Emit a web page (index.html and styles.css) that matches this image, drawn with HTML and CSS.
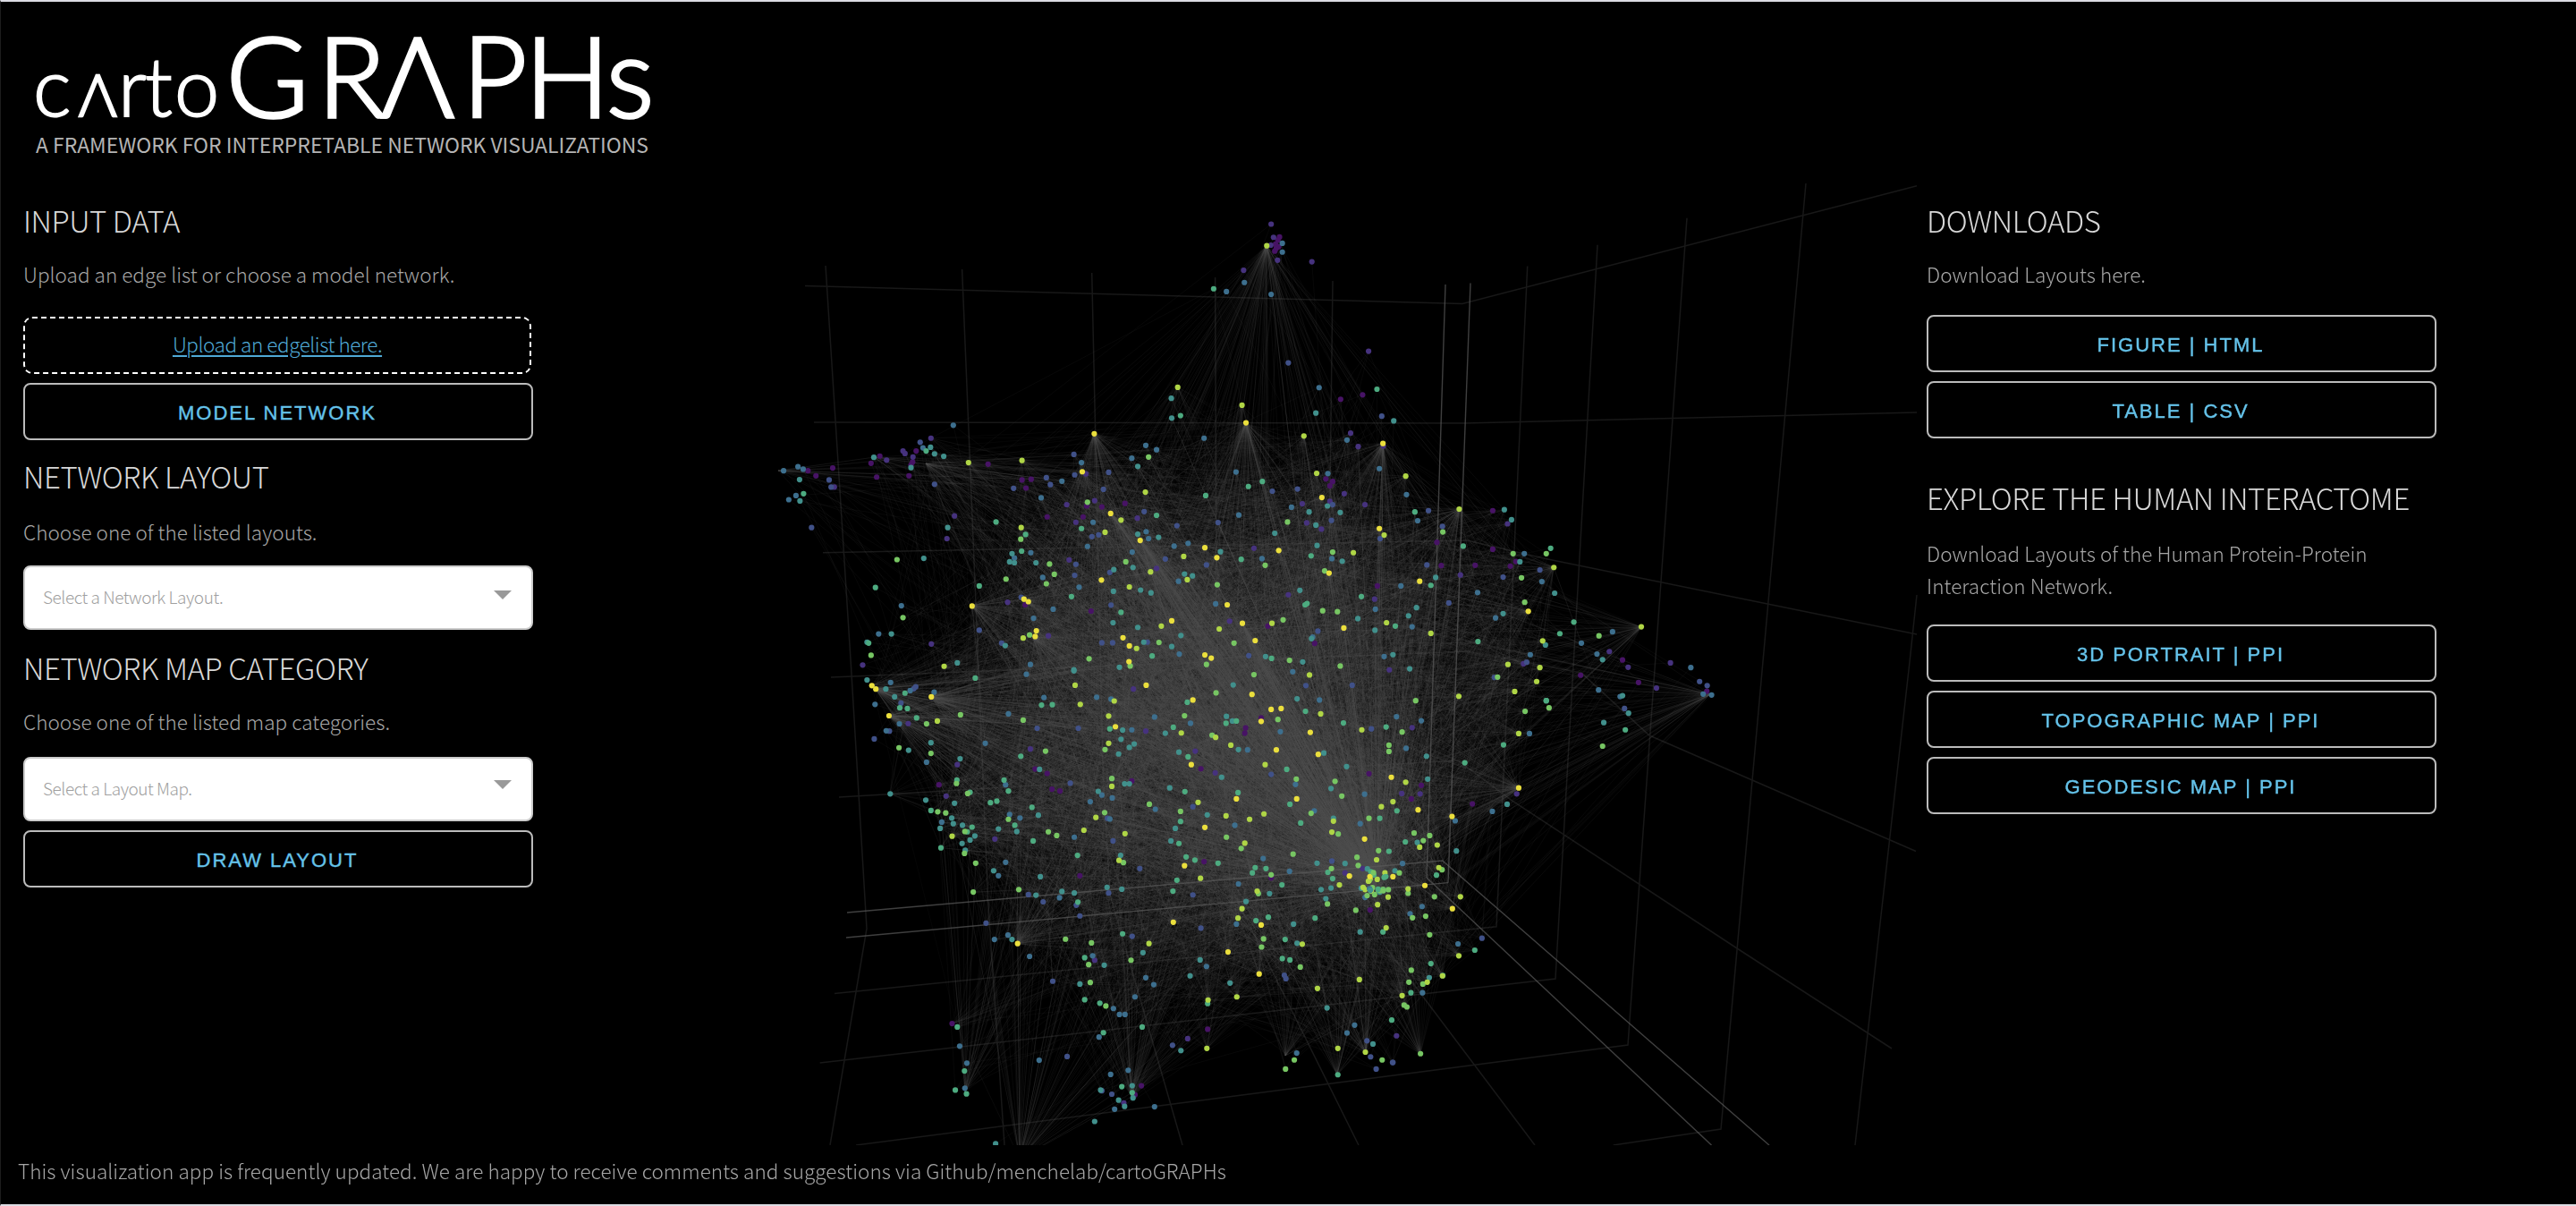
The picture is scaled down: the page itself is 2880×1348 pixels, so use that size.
FILE: index.html
```html
<!DOCTYPE html>
<html lang="en">
<head>
<meta charset="utf-8">
<title>cartoGRAPHs</title>
<link rel="stylesheet" href="styles.css">
</head>
<body>
<div class="app">
  <header class="header">
    <svg class="logo" width="740" height="190" viewBox="0 0 740 190" role="img" aria-label="cartoGRAPHs">
      <text class="logo-small" y="128" x="36">c<tspan class="logo-peak" x="87">Λ</tspan><tspan x="131 161 194">rto</tspan></text>
      <text class="logo-large" y="128.500" x="252 354 425 516 586 677">GRΛPHs</text>
      <text class="logo-sub" x="39" y="169" textLength="685" lengthAdjust="spacingAndGlyphs">A FRAMEWORK FOR INTERPRETABLE NETWORK VISUALIZATIONS</text>
    </svg>
  </header>
  <main class="main">
    <section class="panel panel-left">
      <h2 class="title">INPUT DATA</h2>
      <p class="text">Upload an edge list or choose a model network.</p>
      <div class="upload"><a class="upload-link">Upload an edgelist here.</a></div>
      <button class="button">MODEL NETWORK</button>
      <h2 class="title title-layout">NETWORK LAYOUT</h2>
      <p class="text text-layout">Choose one of the listed layouts.</p>
      <div class="select"><span class="select-label">Select a Network Layout.</span><i class="arrow"></i></div>
      <h2 class="title title-map">NETWORK MAP CATEGORY</h2>
      <p class="text text-map">Choose one of the listed map categories.</p>
      <div class="select"><span class="select-label">Select a Layout Map.</span><i class="arrow arrow-up"></i></div>
      <button class="button">DRAW LAYOUT</button>
    </section>
    <canvas class="plot" id="plot" width="1284" height="1075"></canvas>
    <section class="panel panel-right">
      <h2 class="title">DOWNLOADS</h2>
      <p class="text text-downloads">Download Layouts here.</p>
      <button class="button">FIGURE | HTML</button>
      <button class="button">TABLE | CSV</button>
      <h2 class="title title-explore">EXPLORE THE HUMAN INTERACTOME</h2>
      <p class="text text-explore">Download Layouts of the Human Protein-Protein<br>Interaction Network.</p>
      <button class="button">3D PORTRAIT | PPI</button>
      <button class="button">TOPOGRAPHIC MAP | PPI</button>
      <button class="button">GEODESIC MAP | PPI</button>
    </section>
  </main>
  <footer class="footer">This visualization app is frequently updated. We are happy to receive comments and suggestions via Github/menchelab/cartoGRAPHs</footer>
</div>
<script src="plot.js"></script>
</body>
</html>
```
FILE: styles.css
```css
* { box-sizing: border-box; }
body {
  margin: 0;
  background: #000;
  color: #a6a6a6;
  font-family: "Noto Sans CJK SC", "Noto Sans", sans-serif;
  font-weight: 300;
}
.app {
  width: 2880px;
  height: 1348px;
  border-top: 2px solid #dcdce4;
  border-bottom: 2px solid #dcdce4;
  border-left: 1px solid #1d1d1d;
  display: flex;
  flex-direction: column;
  overflow: hidden;
}
.header { height: 203px; flex: none; }
.logo { display: block; }
.logo text { fill: #fff; }
.logo .logo-small, .logo .logo-large { font-family: Lato, sans-serif; font-weight: 300; stroke: #fff; }
.logo .logo-small { font-size: 90px; stroke-width: 1.8px; }
.logo .logo-peak { font-size: 65px; stroke-width: 2.5px; }
.logo .logo-large { font-size: 125px; stroke-width: 3.5px; }
.logo .logo-sub { fill: #b4b4b4; font-size: 23.5px; font-weight: 400; }
.main { height: 1075px; flex: none; display: flex; }
.panel { width: 570px; padding-top: 21px; display: flex; flex-direction: column; flex: none; }
.panel-left { margin-left: 25px; }
.panel-right { margin-left: 10px; }
.plot { width: 1284px; height: 1075px; margin-left: 264px; flex: none; display: block; }
.title {
  margin: 0;
  color: #d8d8d8;
  font-size: 33px;
  line-height: 40px;
  font-weight: 300;
  letter-spacing: -0.42px;
  white-space: nowrap;
}
.text {
  margin: 22px 0 30px;
  font-size: 22.5px;
  line-height: 36px;
  letter-spacing: 0.03px;
  white-space: nowrap;
}
.title-layout { margin-top: 10px; }
.title-map { margin-top: 22px; }
.title-explore { margin-top: 36px; }
.text-layout { margin: 24px 0 20px; }
.text-map { margin-bottom: 22px; }
.text-downloads { margin-bottom: 28px; }
.text-explore { margin: 24px 0 26px; }
.upload {
  width: 568px;
  height: 64px;
  margin-bottom: 10px;
  border: 2px dashed #fff;
  border-radius: 10px;
  text-align: center;
  font-size: 22.5px;
  line-height: 57px;
  letter-spacing: -0.45px;
}
.upload-link { color: #4fa9d6; text-decoration: underline; text-decoration-thickness: 2px; text-underline-offset: 3px; }
.button {
  height: 64px;
  margin: 0 0 10px;
  padding: 4px 2px 0 0;
  flex: none;
  border: 2px solid #bbb;
  border-radius: 8px;
  background: transparent;
  color: #65c3ea;
  font: 400 22px "Liberation Sans", sans-serif;
  letter-spacing: 2px;
  -webkit-text-stroke: 0.4px #65c3ea;
}
.select {
  height: 72px;
  flex: none;
  border: 2px solid #ccc;
  border-radius: 8px;
  background: #fff;
  color: #a0a0a0;
  font-size: 19px;
  letter-spacing: -0.45px;
  line-height: 66px;
  padding: 0 22px 0 20px;
  display: flex;
  justify-content: space-between;
}
.select + .button { margin-top: 10px; }
.arrow {
  margin-top: 26px;
  width: 20px;
  height: 10px;
  background: #999;
  clip-path: polygon(0 0, 100% 0, 50% 100%);
}
.arrow-up { margin-top: 24px; }
.footer { padding-left: 19px; margin-top: 10px; font-size: 22.5px; line-height: 36px; letter-spacing: 0.05px; white-space: nowrap; }
```
FILE: plot.js
```js
// Viridis steps, low to high degree.
const COLORS = {
  a: '#471365', b: '#46327e', c: '#405188', d: '#3d6f8e', e: '#41908c',
  f: '#4dab80', g: '#77c663', h: '#b0d646', i: '#ebdf3d'
};

// Node positions by quadrant: [x origin, y origin, nodes by colour].
const SX = 700 / 1568, SY = 550 / 1568;
const QUADRANTS = [
  [860, 200, {
    a: '1278 185 1274 195 1268 208 1276 216 1266 230 1270 221 97 930 117 946 159 921 255 906 269 950 277 883 368 867 359 902 355 912 350 946 548 909 633 959 656 957 643 985 795 1042 833 1045 891 1034 786 1077 696 1077 1431 702 1394 956 1411 964 1404 978 806 1377 641 1357 1249 1425 1366 1480 1523 1297 1486 688',
    b: '1257 144 1263 186 1256 211 1273 259 1188 291 1359 264 1501 549 405 826 335 867 360 886 294 896 340 875 163 982 464 1074 445 1146 234 1549 406 1482 745 1038 815 1025 768 1094 922 1081 751 1214 970 1241 597 1349 699 1456 1456 810 1475 853 1538 851 1440 1003 1335 1035 1404 1027 1492 1038 1346 1096 1383 1116 1214 1177 1300 1325 1516 1339 793 940 1153 1409',
    c: '106 1111 155 982 150 959 378 839 414 973 763 878 765 943 694 952 612 986 704 974 850 935 837 989 768 1228 765 1263 853 1254 856 1358 939 1060 808 1140 825 1134 1021 1105 992 1211 1124 1095 1095 1230 860 1478 833 1478 582 1479 526 1438 631 1333 1300 586 1323 988 1408 1088 1411 1038 1530 1146 1374 1441 1201 1519 1260 995 1534 756 947 1476',
    d: '36 930 72 917 85 925 49 1022 67 1009 385 857 461 785 1285 205 1285 233 1257 368 1190 330 1145 359 1089 826 1377 665 943 849 970 863 782 904 733 963 1169 934 681 1016 811 1094 944 1124 950 1146 797 1171 1049 1161 1014 1170 909 1189 655 1191 614 1208 685 1270 776 1301 711 1371 662 1400 331 1360 274 1450 1118 1354 1447 832 1399 939 1528 923 1308 1046 1176 1071 1234 1210 1518 1371 1409 1210 1361 1460 1027 1514 654 1547 1540 1522 908 890 1025 1282',
    e: '76 958 77 1026 262 887 355 920 404 855 414 876 437 884 447 1111 387 1209 245 1476 306 1450 471 1542 591 1487 1007 699 1008 762 923 916 923 1132 975 1142 608 1194 602 1220 614 1223 668 1223 863 1245 911 1238 862 1314 930 1310 956 1319 861 1414 923 1429 1031 1455 1008 1490 938 1476 1040 1259 1060 1265 1130 1188 1369 746 1352 1061 1398 1042 1430 1063 1369 1103 1266 1129 1372 1168 1435 1218 1329 1311 1474 1401 1358 1465 1517 1438 1243 1522 1336 1539 877 1556 763 1564 1564 771 1562 1516',
    f: '86 1003 249 1479 266 1302 568 1093 526 1297 1113 350 393 867 1030 754 1235 964 1200 980 1093 1009 970 1072 782 1114 642 1133 632 1186 881 1381 757 1331 1182 1212 1357 1201 1342 1357 1483 1331 959 1520 1258 1528 1522 670 1347 1353',
    g: '320 1213 335 1398 255 1518 593 1275 630 1148 702 1227 714 1260 950 886 797 1030 893 1220 1242 1231 1122 1293 1298 1093 1391 1249 1386 1376 1423 1379 1287 1405 1411 1189 976 1477 1164 1479 1303 1534 1430 1552 904 1552 801 1529 652 1453 1095 1547 694 1290',
    h: '1246 213 1023 664 1184 721 1339 819 499 904 633 897 631 1111 841 1126 881 1087 942 998 955 1252 902 1300 1038 1203 1371 938 1463 1191 982 1425 1127 1434 1259 1416 1546 1414 438 1553 920 1496 1540 1135 636 1463 1047 1277',
    i: '814 812 1194 777 784 933 855 1066 929 1152 832 1278 638 1339 649 1347 508 1361 669 1440 666 1458 1091 1175 1121 1207 1276 1184 1384 1015 1537 843 1528 1114 1402 1256 1147 1357 1185 1416 1008 1408 1217 1471 1439 1431 886 1462 902 1488 901 1538 1091 1517 1107 1527'
  }],
  [1460, 200, {
    a: '468 1057 328 1158 424 1231 339 1232 468 1180 526 1219 512 1234 793 1533',
    b: '505 1099 387 1262 760 1506 913 1542 545 1545 807 1556',
    c: '307 1057 342 1107 303 1230 358 1351 586 1246 494 1269 553 1540',
    d: '252 1006 280 1089 238 1297 266 1427 430 1318 547 1194 591 1283 475 1399 562 1516 690 1479 768 1443 729 1514 964 1557',
    e: '497 1054 515 1086 325 1270 277 1366 257 1392 536 1220 494 1385 623 1320 600 1485 743 1532 260 1561',
    f: '273 1061 394 1170 313 1295 224 1425 613 1177 636 1449 671 1412 431 1474',
    g: '343 1125 519 1194 602 1194 540 1271 548 1349 734 1456',
    h: '250 947 384 1052 313 1448 506 1547 621 1238 593 1472 840 1427 586 1557',
    i: '285 1282 557 1378'
  }],
  [860, 740, {
    a: '1232 178 1193 210 1191 227 1081 340 696 355 666 341 708 405 728 411 425 391 908 379 1089 636 1257 688 1502 356 1098 1170 932 1350 916 1379 778 681 458 1152 1505 790',
    b: '348 196 471 327 443 427 565 564 654 277 943 220 912 86 1067 284 1117 353 888 1405 815 950 1048 1200 1553 25 1442 672 1486 658',
    c: '263 245 301 220 367 79 330 131 362 85 671 211 774 211 754 386 861 570 847 498 850 736 778 809 710 1017 746 1257 543 832 649 741 686 764 928 658 1081 848 1061 742 909 874 1290 998 1294 1009 1010 1221 833 1366 858 1377 1344 75 1460 74 1508 213 1257 358 1520 1297 1562 1276 1506 1258 1497 1207 1409 634 1061 461 769 775',
    d: '304 65 265 135 326 197 353 91 293 219 394 319 413 96 541 259 599 165 644 39 592 391 602 486 592 638 628 497 574 681 688 113 820 112 856 118 965 175 1055 195 908 216 1198 280 833 424 804 445 967 469 853 500 764 558 859 433 727 751 810 936 598 870 564 884 652 938 477 1224 495 1278 676 1269 891 1123 877 1123 826 1195 865 1425 965 1417 855 1314 899 1301 943 1006 963 1028 916 1067 1237 626 1303 667 1175 707 1166 520 1318 390 1280 222 1378 121 1480 515 1491 421 1365 474 1095 970 1321 1246 1447 1182 1466 1157 1170 835 1492 750 432 510 1311 31 862 1104 490 1358',
    e: '245 57 292 86 314 111 349 281 303 420 392 440 405 257 478 308 457 497 461 515 428 530 484 520 515 554 483 578 503 567 491 600 464 450 677 342 674 488 562 665 679 684 574 532 620 540 668 743 733 731 764 736 846 718 883 724 881 246 914 261 902 272 875 293 885 217 890 388 902 388 824 412 992 227 1026 287 1133 367 1175 279 1145 173 1162 73 1160 188 1322 117 1389 290 1446 333 1407 403 1003 401 1097 487 1006 570 1017 530 880 616 839 966 778 1026 936 926 1054 1000 1079 949 1154 1023 1253 738 1194 763 1313 835 1397 1102 1413 498 1382 725 1407 720 1394 754 1480 860 1498 659 1442 642 1372 641 1322 896 1512 1217 1031 1238 830 1364 909 1350 911 1389 890 1416 875 1396 815 1464 567 1535 608 884 763 28',
    f: '340 99 346 148 327 146 369 178 470 376 503 415 405 473 430 592 508 526 496 541 588 376 599 411 570 443 554 448 615 520 516 51 661 570 682 137 709 136 630 300 658 463 772 616 853 213 1012 208 1041 413 1049 302 1047 128 1144 195 1170 188 1174 416 1030 508 1026 578 1044 621 1066 631 1124 641 1021 695 1217 655 1244 658 1210 672 1284 710 1250 813 1219 824 1292 884 1285 945 1304 949 1367 816 1331 513 1296 342 1343 157 1438 194 1545 207 1529 498 1552 603 1537 860 1399 670 1411 690 471 1163 466 1364 489 1303 494 1376 790 1076 828 1087 934 1163 837 1181 883 1353 909 1372 1424 1315 885 866 1304 453 790 942 1559 1141 1011 730 773 765 1098 1088',
    g: '325 273 405 291 394 197 469 387 497 419 442 481 422 477 489 610 490 540 517 641 511 733 599 501 636 185 479 168 692 284 699 541 720 553 840 480 841 279 858 371 625 725 742 883 807 895 800 964 804 1021 843 1096 906 950 1040 171 1119 98 1109 233 952 453 1030 476 1145 558 1182 594 1214 40 1274 183 1320 373 1312 612 1434 427 1425 548 1417 380 1330 972 1238 882 1233 908 1257 678 1357 482 1552 265 1552 285 1502 498 1472 622 1526 601 1475 648 1408 658 1398 771 1469 791 1315 1268 1293 1297 1535 1268 887 639 1225 738 1516 741 1526 729 1507 730',
    h: '421 188 458 555 766 74 779 135 850 172 850 259 864 124 818 495 788 536 891 547 876 632 858 396 1032 226 1118 240 1156 265 1242 327 1144 490 1203 501 1191 577 1239 484 1074 447 1080 689 1184 786 1174 816 1222 730 1381 165 1353 41 1484 216 1533 461 1409 542 1413 507 1521 630 1542 672 1505 691 1428 710 1492 725 1545 847 1478 1012 1373 1040 1171 1067 1099 1077 1096 1231 1424 1231 1493 1243 1335 899 1562 445 1550 749 951 897',
    i: '257 75 267 86 300 171 406 111 944 74 1061 121 1209 103 1257 151 1282 148 1232 189 1270 280 1355 224 1375 294 1057 327 1170 436 1091 527 1040 649 867 206 622 897 1012 829 1149 924 1227 994 1232 838 1321 436 1491 564 1453 682 1558 367 1562 684'
  }],
  [1460, 740, {
    a: '833 65 289 393 264 436 417 452 688 42 1004 93',
    b: '240 419 286 420 528 420 878 83 266 209 227 1191',
    c: '986 62 1005 75 798 148 472 49 441 880 217 1276',
    d: '995 102 1016 105 227 174 289 187 251 275 733 89 560 228 467 476 374 506 242 642 291 779 261 802 381 898 292 1054 787 110',
    e: '302 300 305 373 504 453 746 193 808 163 377 602 279 575 223 665 309 1006 793 107',
    f: '398 321 495 264 602 123 800 216 249 573 228 474 327 679 313 961 263 1054 423 918 343 999 602 123',
    g: '275 123 241 223 549 157 609 146 743 268 310 553 294 569 341 662 234 672 322 748 300 810 267 815 310 869 264 982 258 1020 246 1093 253 1099 287 1248 271 545 480 48 256 737 293 1026',
    h: '383 109 578 62 523 94 533 228 250 383 285 590 329 583 333 655 387 748 383 936 304 1020 241 1063 256 723 342 1000',
    i: '533 401 281 471 366 492 298 712 367 786'
  }]
];

// Dense cluster at the foot of the brightest bundle.
const CLUSTER = 'gfehgifgeghfgdgefhgifegh';

const OX = 860, OY = 205;
const ctx = document.getElementById('plot').getContext('2d');
ctx.translate(-OX, -OY);

let seed = 20210;
const rnd = () => ((seed = (seed * 1664525 + 1013904223) >>> 0) / 4294967296);

const nodes = [];
for (const [ox, oy, groups] of QUADRANTS) {
  for (const c in groups) {
    const v = groups[c].split(' ').map(Number);
    for (let k = 0; k < v.length; k += 2) nodes.push({ x: ox + v[k] * SX, y: oy + v[k + 1] * SY, c });
  }
}
for (const c of CLUSTER) {
  nodes.push({ x: 1538 + (rnd() + rnd() - 1) * 18, y: 988 + (rnd() + rnd() - 1) * 24, c });
}

function polyline(points) {
  ctx.beginPath();
  ctx.moveTo(points[0], points[1]);
  for (let k = 2; k < points.length; k += 2) ctx.lineTo(points[k], points[k + 1]);
  ctx.stroke();
}

// Grid of the three back walls.
ctx.lineWidth = 1.5;
ctx.strokeStyle = '#181818';
[
  [923, 297, 951.5, 745, 969, 1038, 928, 1280],
  [1075.6, 301, 1104.6, 1007, 1123, 1280],
  [1220.7, 305, 1233, 863, 1241, 1000, 1322, 1280],
  [1358.6, 310, 1360, 700, 1375, 990, 1519, 1280],
  [1490, 314, 1485, 700, 1490, 980, 1716, 1280],
  [900, 319.6, 1635, 339.6, 2143, 207.7],
  [910, 472, 1638, 473, 2143, 461],
  [920, 617.8, 1640, 604, 1728, 624.5, 2143, 709],
  [929, 757, 1640, 728, 1768, 752, 1844, 822, 2142, 951.5],
  [938, 891, 1630, 850, 1692, 896, 1942, 1060, 2115, 1172],
  [933, 1110.4, 1673, 1035.7, 1693.5, 603, 1707.7, 297.5],
  [916.7, 1188, 1739, 1094, 1786, 273.7],
  [957, 1280, 1820, 1168, 1886, 243.8],
  [1803.7, 1280, 1924, 1262, 2019, 205],
  [2143, 665, 2135, 740, 2074, 1280]
].forEach(polyline);

// Edges.
ctx.lineWidth = 1;
const inner = nodes.filter(n => n.x > 1040 && n.x < 1720 && n.y > 480 && n.y < 1150);
const hubs = nodes.filter(n => n.c === 'i' || n.c === 'h');
const pick = list => list[Math.floor(rnd() * list.length)];
function edge(a, b, alpha) {
  ctx.strokeStyle = `rgba(84,84,84,${alpha})`;
  ctx.beginPath();
  ctx.moveTo(a.x, a.y);
  ctx.lineTo(b.x, b.y);
  ctx.stroke();
}
for (const h of hubs) {
  const n = h.c === 'i' ? 75 : 38;
  for (let k = 0; k < n; k++) edge(h, pick(inner), 0.07);
}
for (const a of nodes) {
  for (let k = 0; k < 5; k++) {
    const b = pick(inner);
    if (Math.hypot(a.x - b.x, a.y - b.y) < 520) edge(a, b, 0.09);
  }
}

// Bundles fanning out of a single hub: [x, y, count, targets centre x, y, spread].
[
  [1416, 275, 90, 1420, 620, 330],
  [1393, 473, 110, 1430, 760, 280],
  [1223, 485, 80, 1300, 720, 260],
  [1546, 497, 80, 1540, 760, 220],
  [1035, 518, 60, 1300, 650, 260],
  [870, 526, 22, 1060, 560, 140],
  [977, 511, 25, 1150, 600, 150],
  [979, 770, 120, 1300, 880, 220],
  [1041, 779, 120, 1350, 860, 220],
  [994, 800, 110, 1300, 900, 200],
  [1087, 677, 80, 1300, 800, 220],
  [1155, 713, 90, 1400, 880, 240],
  [1540, 986, 520, 1390, 690, 280],
  [1538, 990, 240, 1440, 790, 130],
  [1275, 604, 110, 1500, 940, 120],
  [1242, 574, 70, 1480, 880, 150],
  [1389, 697, 90, 1530, 960, 60],
  [1835, 701, 40, 1600, 800, 200],
  [1912, 776, 70, 1640, 880, 250],
  [1698, 881, 60, 1500, 820, 180],
  [1137, 1055, 50, 1300, 900, 180],
  [1140, 1295, 90, 1250, 1000, 240],
  [1265, 1225, 80, 1290, 960, 210],
  [1079, 1220, 40, 1180, 950, 180],
  [1437, 1180, 40, 1490, 950, 190],
  [1527, 1176, 50, 1500, 950, 190],
  [1495, 1201, 40, 1500, 950, 190],
  [1588, 1178, 40, 1530, 980, 140],
  [995, 887, 15, 1080, 850, 100],
  [1737, 634, 45, 1620, 760, 180],
  [1632, 569, 70, 1560, 750, 200]
].forEach(([x, y, n, cx, cy, s]) => {
  for (let k = 0; k < n; k++) {
    let b = pick(nodes);
    for (let t = 0; t < 60 && Math.hypot(b.x - cx, b.y - cy) > s; t++) b = pick(nodes);
    edge({ x, y }, b, 0.12);
  }
});

// Axis lines.
ctx.lineWidth = 1.4;
ctx.strokeStyle = 'rgba(90,90,90,.7)';
[
  [1616, 318, 1595, 981],
  [1644, 316.5, 1619, 986.6],
  [947, 1020, 1612.7, 962, 1978, 1280],
  [946, 1048, 1619, 986.6],
  [1595, 981, 1913.5, 1280]
].forEach(polyline);

for (const n of nodes) {
  ctx.fillStyle = COLORS[n.c];
  ctx.beginPath();
  ctx.arc(n.x, n.y, 3.1, 0, 7);
  ctx.fill();
}
```
